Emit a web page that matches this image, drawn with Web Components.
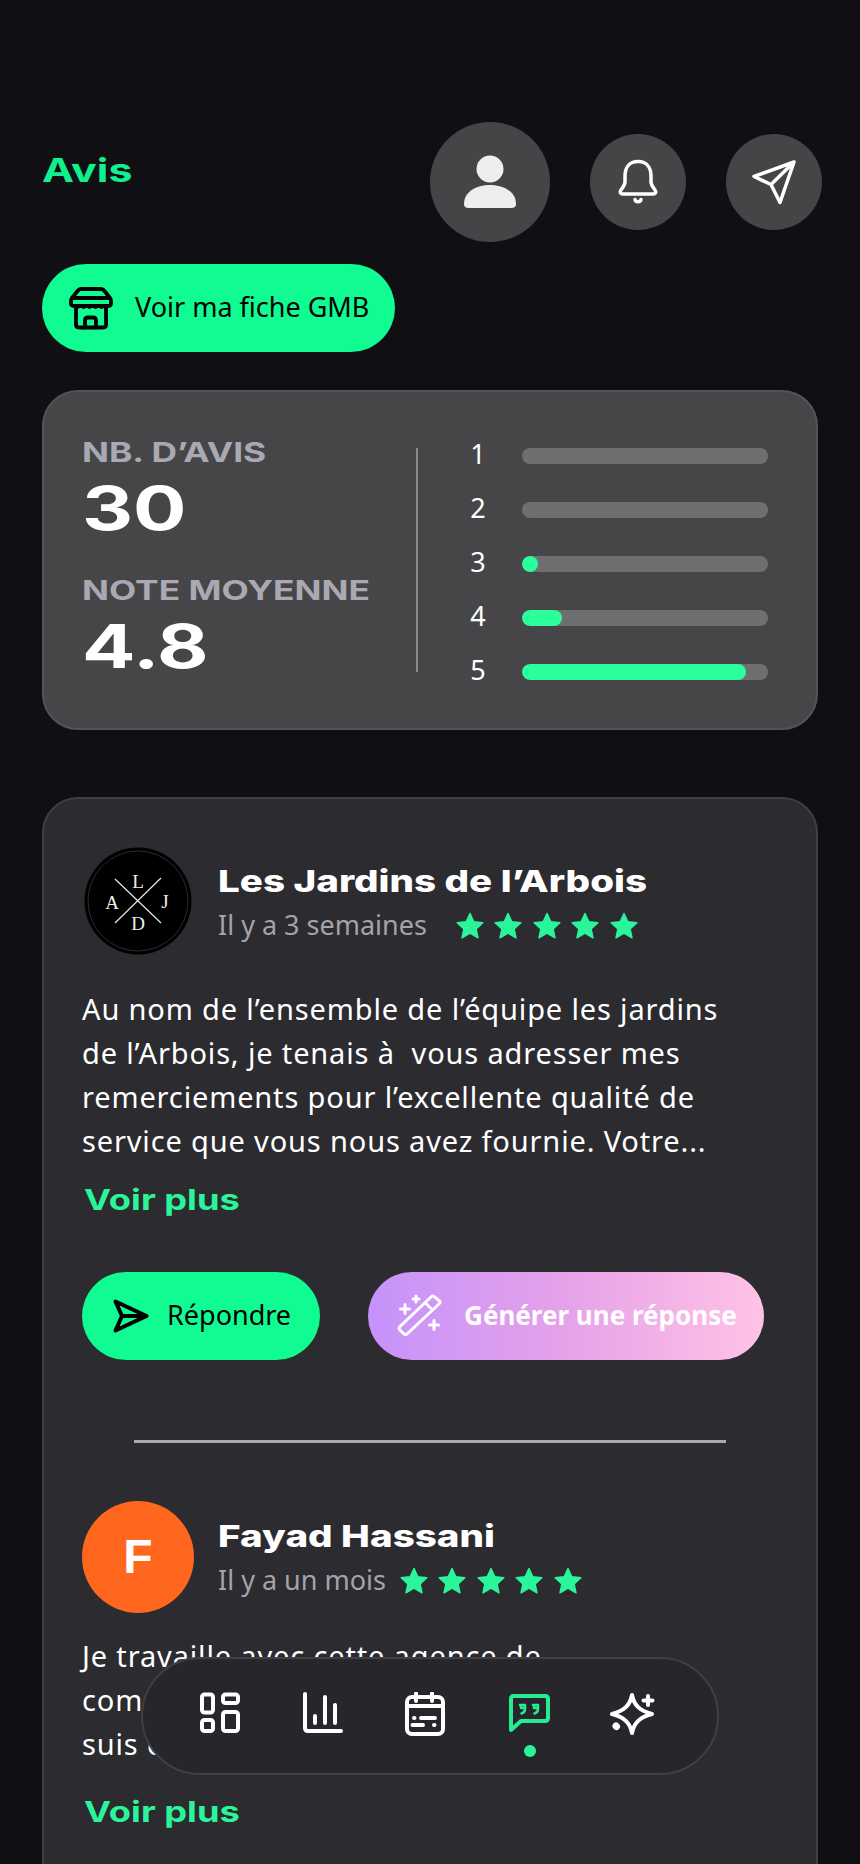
<!DOCTYPE html>
<html lang="fr">
<head>
<meta charset="utf-8">
<title>Avis</title>
<style>
  html, body { margin: 0; height: 1864px; overflow: hidden; background: #0f0f14; }
  body { font-family: "Noto Sans", sans-serif; color: #fff; position: relative; }
</style>
</head>
<body>
<avis-page>
  <page-header title="Avis"></page-header>
  <ui-pill style="--pad-l:27px;--pad-r:26px;--gap:22px;margin-top:22px">
    <svg slot="icon" width="44" height="44" viewBox="0 0 44 44" fill="none" stroke="#000" stroke-width="3.800" stroke-linejoin="round" stroke-linecap="round">
      <path d="M12 3 H32 Q34 3 35.500 5 L41 12 Q42 13 42 15 V17.500 Q42 20 39 20 H5 Q2 20 2 17.500 V15 Q2 13 3 12 L8.500 5 Q10 3 12 3 Z M3 12 H41"/>
      <path d="M5.500 20 Q8.500 24 11.500 20 Q14.500 24 17.500 20 Q20.500 24 23.500 20 Q26.500 24 29.500 20 Q32.500 24 35.500 20" stroke-width="2"/>
      <path d="M7 22 V38.500 Q7 41.500 10 41.500 H34 Q37 41.500 37 38.500 V22"/>
      <path d="M16 41.500 V34.500 Q16 31.500 19 31.500 H24 Q27 31.500 27 34.500 V41.500"/>
    </svg>
    Voir ma fiche GMB
  </ui-pill>
  <stat-card total="30" average="4.8"></stat-card>
  <review-panel>
    <review-item name="Les Jardins de l’Arbois" when="Il y a 3 semaines" style="--sub-gap:29px;--text-top:29px;--more-top:17px">
      <svg slot="avatar" width="112" height="112" viewBox="0 0 112 112">
        <circle cx="56" cy="55" r="53.500" fill="#000"/>
        <circle cx="56" cy="55" r="50" fill="none" stroke="#2b2b30" stroke-width="1"/>
        <g stroke="#e8e8e8" stroke-width="1.200">
          <line x1="33" y1="33" x2="79" y2="77"/>
          <line x1="79" y1="32" x2="33" y2="77"/>
        </g>
        <g fill="#eee" font-family="'Liberation Serif', serif" font-size="19" text-anchor="middle">
          <text x="56" y="42">L</text>
          <text x="56" y="84">D</text>
          <text x="30" y="63">A</text>
          <text x="83" y="62">J</text>
        </g>
      </svg>
      Au nom de l’ensemble de l’équipe les jardins<br>
      de l’Arbois, je tenais à&nbsp; vous adresser mes<br>
      remerciements pour l’excellente qualité de<br>
      service que vous nous avez fournie. Votre...
      <div slot="actions" class="actions" style="display:flex;gap:48px;margin-top:52px">
        <ui-pill style="--pad-l:31px;--pad-r:29px;--gap:18px">
          <svg slot="icon" width="36" height="34" viewBox="0 0 36 34" fill="none" stroke="#000" stroke-width="4" stroke-linejoin="round" stroke-linecap="round">
            <path d="M2.500 2.500 L33.500 17 L2.500 31.500 L9 17 Z M9 17 H33.500"/>
          </svg>
          Répondre
        </ui-pill>
        <ui-pill variant="magic" style="--pad-l:29px;--pad-r:27px;--gap:22px">
          <svg slot="icon" width="45" height="46" viewBox="0 0 45 46" fill="none" stroke="#fff" stroke-width="3" stroke-linecap="round" stroke-linejoin="round">
            <path d="M37 3.500 L42.500 8 Q43.500 9 42.500 10.500 L10 41 Q8.500 42 7 41 L2.500 36.500 Q1.500 35 3 33.500 L34.500 3.500 Q35.500 2.500 37 3.500 Z"/>
            <path d="M28 9.500 L33.500 15"/>
            <path d="M8 11.500 V20.500 M3.500 16 H12.500 M19 3 V9 M16 6 H22 M37 27.500 V36.500 M32.500 32 H41.500"/>
          </svg>
          Générer une réponse
        </ui-pill>
      </div>
    </review-item>
    <hr-line></hr-line>
    <review-item name="Fayad Hassani" when="Il y a un mois" style="--sub-gap:14px;--text-top:21px;--more-top:26px">
      <letter-avatar slot="avatar" letter="F"></letter-avatar>
      Je travaille avec cette agence de<br>
      communication<br>
      suis content
    </review-item>
  </review-panel>
  <nav-dock></nav-dock>
</avis-page>

<script>
// la police d'origine est tres large : Inter etire horizontalement
const WIDE = 'display:inline-block;transform-origin:left center;white-space:nowrap;';

class AvisPage extends HTMLElement {
    constructor() {
        super();
        this.attachShadow({ mode: 'open' });
        this.shadowRoot.innerHTML = `
        <style>
            :host { display: flex; flex-direction: column; align-items: flex-start; padding: 122px 42px 0; height: 1864px; box-sizing: border-box; overflow: hidden; }
        </style>
        <slot></slot>`;
    }
}

class PageHeader extends HTMLElement {
    constructor() {
        super();
        this.attachShadow({ mode: 'open' });
    }

    connectedCallback() {
        this.shadowRoot.innerHTML = `
        <style>
            :host { display: flex; align-items: flex-start; width: 780px; height: 120px; }
            h1 { margin: 26px auto 0 0; font: 700 33px/44px Inter, sans-serif; color: #10f08e; ${WIDE} transform: scaleX(1.3); }
            .btn { display: flex; align-items: center; justify-content: center; border-radius: 50%; background: #454547; width: 96px; height: 96px; margin-top: 12px; }
            .user { width: 120px; height: 120px; margin-top: 0; margin-right: 40px; }
            .bell { margin-right: 40px; }
            svg { display: block; }
        </style>
        <h1>${this.getAttribute('title')}</h1>
        <div class="btn user">
            <svg width="120" height="120" viewBox="0 0 120 120" fill="#eeeeee">
                <circle cx="60" cy="47" r="13.500"/>
                <path d="M34 82 C34 70 46 63 60 63 C74 63 86 70 86 82 C86 85 84 86 81 86 L39 86 C36 86 34 85 34 82 Z"/>
            </svg>
        </div>
        <div class="btn bell">
            <svg width="96" height="96" viewBox="0 0 96 96" fill="none" stroke="#fff" stroke-width="3.500" stroke-linejoin="round" stroke-linecap="round">
                <path d="M48 27.500 C39 27.500 35 34 35 42 L35 48 C35 51 33 53 31 56 C29.500 58.500 30.500 60 33 60 L63 60 C65.500 60 66.500 58.500 65 56 C63 53 61 51 61 48 L61 42 C61 34 57 27.500 48 27.500 Z"/>
                <path d="M45 65.500 C45.500 68.500 50.500 68.500 51 65.500"/>
            </svg>
        </div>
        <div class="btn">
            <svg width="96" height="96" viewBox="0 0 96 96" fill="none" stroke="#fff" stroke-width="3.500" stroke-linejoin="round" stroke-linecap="round">
                <path d="M68 28 L28 42.500 L45 50.500 L54 68.500 Z M68 28 L45 50.500"/>
            </svg>
        </div>`;
    }
}

class UiPill extends HTMLElement {
    constructor() {
        super();
        this.attachShadow({ mode: 'open' });
        this.shadowRoot.innerHTML = `
        <style>
            :host { display: inline-flex; align-items: center; height: 88px; box-sizing: border-box; border-radius: 44px; background: #10fb92; color: #000;
                    padding: 0 var(--pad-r, 28px) 0 var(--pad-l, 28px); gap: var(--gap, 20px); font: 400 27px/40px "Noto Sans", sans-serif; white-space: nowrap; flex: none; }
            :host([variant="magic"]) { background: linear-gradient(90deg, #c592fb, #e6a2e9 50%, #ffc3e5); color: #fff; font-weight: 700; font-size: 26px; }
            ::slotted(svg) { display: block; flex: none; }
            .label { margin-top: -3px; }
        </style>
        <slot name="icon"></slot><span class="label"><slot></slot></span>`;
    }
}

class StatCard extends HTMLElement {
    constructor() {
        super();
        this.attachShadow({ mode: 'open' });
    }

    connectedCallback() {
        // largeur de remplissage en px, barre complete = 246
        const rows = [[1, 0], [2, 0], [3, 16], [4, 40], [5, 224]];
        this.shadowRoot.innerHTML = `
        <style>
            :host { display: flex; width: 776px; height: 340px; box-sizing: border-box; margin-top: 38px; background: #464648; border: 2px solid #545456; border-radius: 36px; padding: 47px 0 0 38px; flex: none; }
            .left { width: 334px; flex: none; }
            .label { font: 700 27px/28px Inter, sans-serif; color: #a9a9b3; height: 28px; }
            .label span { ${WIDE} transform: scaleX(1.31); }
            .value { font: 700 60px/60px Inter, sans-serif; color: #fff; margin: 11px 0 39px; height: 60px; }
            .value span { ${WIDE} transform: scaleX(1.32); }
            .sep { width: 2px; height: 224px; background: #8a8a8c; margin-top: 9px; flex: none; }
            .bars { display: flex; flex-direction: column; gap: 38px; margin: 9px 0 0 45px; }
            .row { display: flex; align-items: center; height: 16px; gap: 29px; }
            .num { width: 30px; text-align: center; font: 400 27px/16px "Noto Sans", sans-serif; color: #fff; margin-top: -5px; }
            .track { width: 246px; height: 16px; border-radius: 8px; background: #6f6f71; overflow: hidden; }
            .fill { height: 16px; border-radius: 8px; background: #2bff9b; }
        </style>
        <div class="left">
            <div class="label"><span>NB. D’AVIS</span></div>
            <div class="value"><span>${this.getAttribute('total')}</span></div>
            <div class="label"><span>NOTE MOYENNE</span></div>
            <div class="value"><span>${this.getAttribute('average')}</span></div>
        </div>
        <div class="sep"></div>
        <div class="bars">
            ${rows.map(r => `<div class="row"><span class="num">${r[0]}</span><div class="track"><div class="fill" style="width:${r[1]}px"></div></div></div>`).join('')}
        </div>`;
    }
}

class ReviewPanel extends HTMLElement {
    constructor() {
        super();
        this.attachShadow({ mode: 'open' });
        this.shadowRoot.innerHTML = `
        <style>
            :host { display: block; width: 776px; box-sizing: border-box; margin-top: 67px; background: #2b2b30; border: 2px solid #3f3f44; border-radius: 36px; padding: 47px 38px 200px 38px; flex: none; }
        </style>
        <slot></slot>`;
    }
}

class ReviewItem extends HTMLElement {
    constructor() {
        super();
        this.attachShadow({ mode: 'open' });
    }

    connectedCallback() {
        const star = '<svg width="28" height="27" viewBox="0 0 28 27"><path fill="#2bf59b" stroke="#2bf59b" stroke-width="1.500" stroke-linejoin="round" d="M14 1.500 L17.800 9.800 L26.800 10.800 L20.100 16.900 L22 25.800 L14 21.200 L6 25.800 L7.900 16.900 L1.200 10.800 L10.200 9.800 Z"/></svg>';
        this.shadowRoot.innerHTML = `
        <style>
            :host { display: block; }
            .head { display: flex; gap: 25px; height: 112px; margin-left: 0; }
            ::slotted([slot="avatar"]) { flex: none; }
            .meta { padding-top: 13px; margin-left: -1px; }
            .name { font: 800 30px/44px Inter, sans-serif; color: #fff; height: 44px; }
            .name span { ${WIDE} transform: scaleX(1.285); }
            .sub { display: flex; align-items: center; gap: var(--sub-gap, 28px); height: 44px; }
            .when { font: 400 27px/44px "Noto Sans", sans-serif; color: #a3a3ad; white-space: nowrap; }
            .stars { display: flex; gap: 10.500px; }
            .stars svg { display: block; }
            .text { margin-top: var(--text-top, 30px); font: 400 29px/44px "Noto Sans", sans-serif; letter-spacing: 0.85px; color: #fff; white-space: nowrap; }
            .more { margin-top: var(--more-top, 16px); font: 700 29px/40px Inter, sans-serif; color: #2bf59b; padding-left: 2px; height: 40px; }
            .more span { ${WIDE} transform: scaleX(1.25); }
        </style>
        <div class="head">
            <slot name="avatar"></slot>
            <div class="meta">
                <div class="name"><span>${this.getAttribute('name')}</span></div>
                <div class="sub">
                    <span class="when">${this.getAttribute('when')}</span>
                    <span class="stars">${star.repeat(5)}</span>
                </div>
            </div>
        </div>
        <div class="text"><slot></slot></div>
        <div class="more"><span>Voir plus</span></div>
        <slot name="actions"></slot>`;
    }
}

class HrLine extends HTMLElement {
    constructor() {
        super();
        this.attachShadow({ mode: 'open' });
        this.shadowRoot.innerHTML = `
        <style>
            :host { display: block; height: 3px; background: #a9a9b3; margin: 80px 52px 58px; }
        </style>`;
    }
}

class LetterAvatar extends HTMLElement {
    constructor() {
        super();
        this.attachShadow({ mode: 'open' });
    }

    connectedCallback() {
        this.shadowRoot.innerHTML = `
        <style>
            :host { display: flex; align-items: center; justify-content: center; width: 112px; height: 112px; border-radius: 50%; background: #ff671f; font: 700 48px/1 "Liberation Sans", sans-serif; color: #fff; }
        </style>
        ${this.getAttribute('letter')}`;
    }
}

class NavDock extends HTMLElement {
    constructor() {
        super();
        this.attachShadow({ mode: 'open' });
        this.shadowRoot.innerHTML = `
        <style>
            :host { position: absolute; left: 141px; top: 1657px; width: 578px; height: 118px; box-sizing: border-box; background: #27272b; border: 2px solid #3f3f44; border-radius: 59px; display: flex; justify-content: center; padding-top: 33px; }
            .items { display: flex; gap: 59px; margin-left: -8px; }
            .item { position: relative; width: 44px; height: 44px; }
            svg { display: block; }
            .dot { position: absolute; left: 17px; top: 53px; width: 12px; height: 12px; border-radius: 50%; background: #2bf59b; }
        </style>
        <div class="items">
            <div class="item">
                <svg width="44" height="44" viewBox="0 0 44 44" fill="none" stroke="#fff" stroke-width="4" stroke-linejoin="round">
                    <rect x="4" y="2.500" width="11" height="18" rx="2.500"/>
                    <rect x="25" y="2.500" width="15" height="8.500" rx="2.500"/>
                    <rect x="4" y="28" width="11" height="11" rx="2.500"/>
                    <rect x="25" y="20" width="15" height="19" rx="2.500"/>
                </svg>
            </div>
            <div class="item">
                <svg width="44" height="44" viewBox="0 0 44 44" fill="none" stroke="#fff" stroke-width="4" stroke-linecap="round" stroke-linejoin="round">
                    <path d="M4 2 V36 Q4 39 7 39 H40"/>
                    <path d="M14 24 V31 M24 5 V31 M34 13 V31"/>
                </svg>
            </div>
            <div class="item">
                <svg width="44" height="44" viewBox="0 0 44 44" fill="none" stroke="#fff" stroke-width="4" stroke-linecap="round" stroke-linejoin="round">
                    <rect x="3" y="5" width="36" height="37" rx="5"/>
                    <path d="M3 14 H39 M12 1.500 V9 M28 1.500 V9"/>
                    <path d="M10 26 H10.500 M17 26 H31 M8.500 33 H19 M30 33 H30.500"/>
                </svg>
            </div>
            <div class="item">
                <svg width="44" height="44" viewBox="0 0 44 44" fill="none" stroke="#26ec91" stroke-width="4" stroke-linejoin="round" stroke-linecap="round">
                    <path d="M4 38 V7 Q4 4 7 4 H38 Q41 4 41 7 V26 Q41 29 38 29 H14 Z"/>
                    <path d="M13 13 H18 V17 Q18 20.500 14.500 21.500 M14 13 V16 H18" stroke-width="2.500"/>
                    <path d="M26 13 H31 V17 Q31 20.500 27.500 21.500 M27 13 V16 H31" stroke-width="2.500"/>
                </svg>
                <div class="dot"></div>
            </div>
            <div class="item">
                <svg width="46" height="44" viewBox="0 0 46 44" fill="none" stroke="#fff" stroke-width="4" stroke-linejoin="round" stroke-linecap="round">
                    <path d="M22 3 C24 13 29 18.500 42 22 C29 25.500 24 31 22 41 C20 31 15 25.500 2 22 C15 18.500 20 13 22 3 Z"/>
                    <path d="M38 4 V13 M33.500 8.500 H42.500"/>
                    <path d="M6 34 L6.500 34.500" stroke-width="7"/>
                </svg>
            </div>
        </div>`;
    }
}

customElements.define('avis-page', AvisPage);
customElements.define('page-header', PageHeader);
customElements.define('ui-pill', UiPill);
customElements.define('stat-card', StatCard);
customElements.define('review-panel', ReviewPanel);
customElements.define('review-item', ReviewItem);
customElements.define('hr-line', HrLine);
customElements.define('letter-avatar', LetterAvatar);
customElements.define('nav-dock', NavDock);
</script>
</body>
</html>
